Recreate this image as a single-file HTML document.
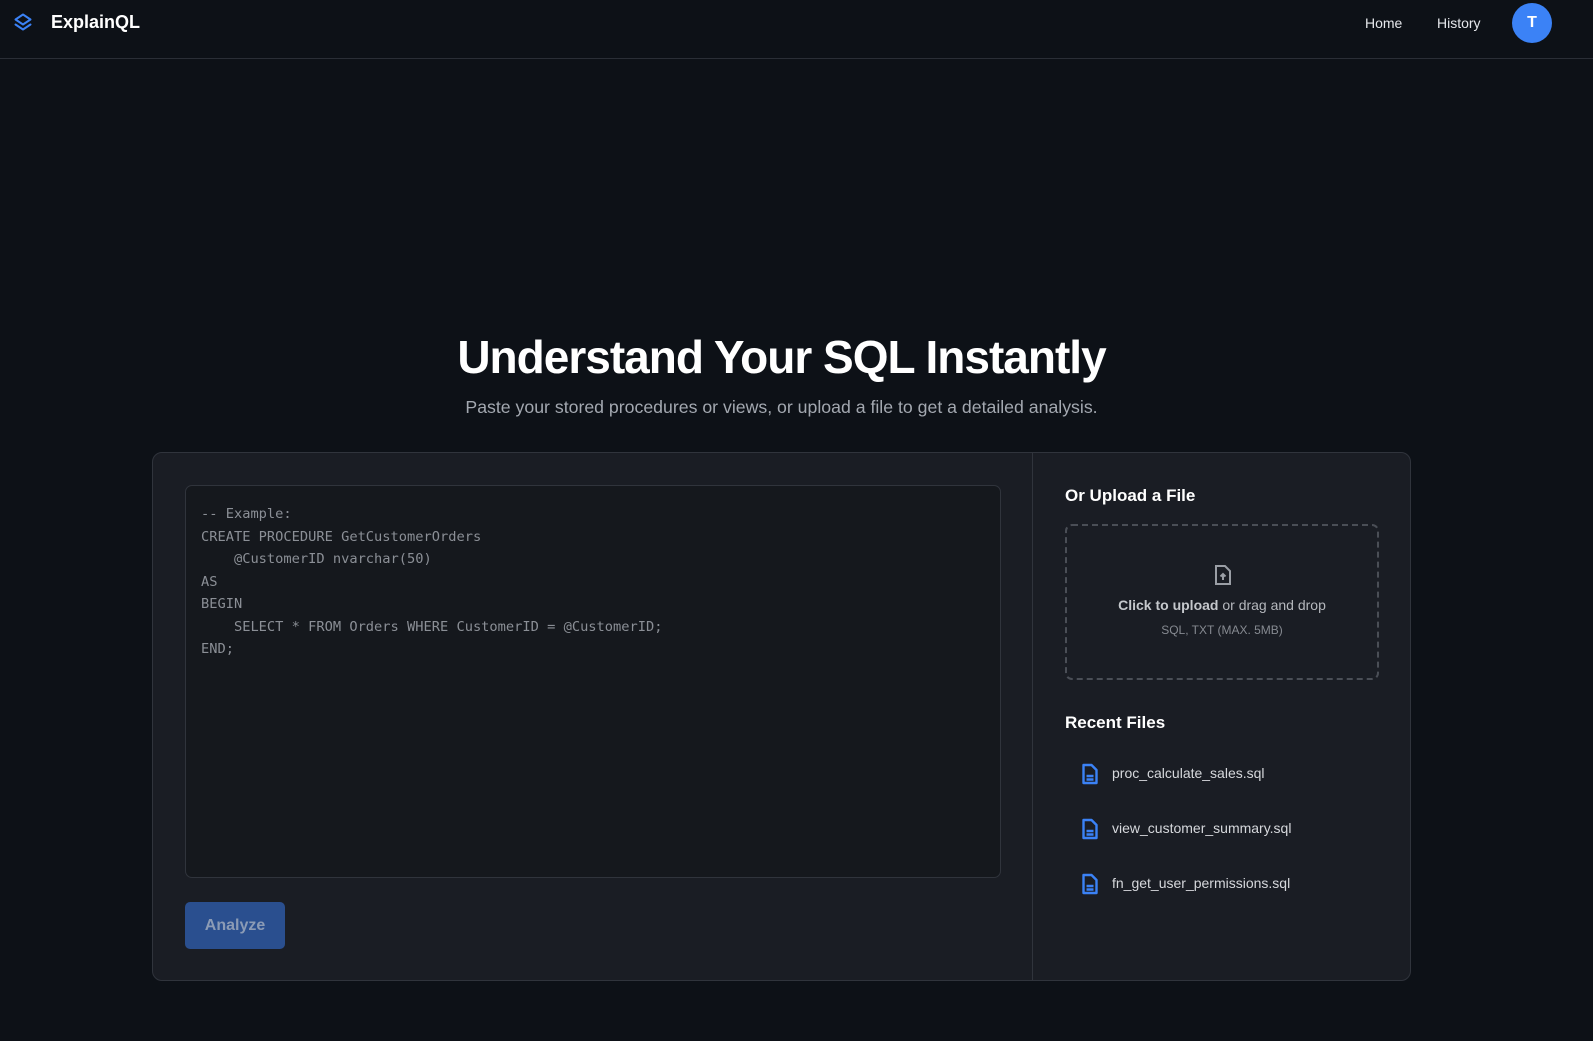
<!DOCTYPE html>
<html><head><meta charset="utf-8"><style>
*{box-sizing:border-box;margin:0;padding:0}
body{width:1593px;height:1041px;background:#0d1117;font-family:"Liberation Sans",sans-serif;color:#e6e6e6;overflow:hidden;position:relative}
.nav{height:59px;border-bottom:1px solid #2a2e36;position:relative}
.logo{position:absolute;left:13px;top:12px}
.brand{position:absolute;left:51px;top:12px;font-size:18px;font-weight:bold;color:#fff}
.nl{position:absolute;top:15px;font-size:14px;color:#e5e7eb}
.av{position:absolute;left:1512px;top:3px;width:40px;height:40px;border-radius:50%;background:#3b82f6;color:#fff;font-weight:bold;font-size:16px;text-align:center;line-height:40px}
h1{position:absolute;left:0;width:1563px;text-align:center;top:330px;font-size:46px;font-weight:bold;color:#fff;letter-spacing:-1px}
.sub{position:absolute;left:0;width:1563px;text-align:center;top:397px;font-size:17.7px;color:#a3a8b0}
.card{position:absolute;left:152px;top:452px;width:1259px;height:529px;background:#1a1d24;border:1px solid #30343c;border-radius:10px}
.div{position:absolute;left:879px;top:0;width:1px;height:100%;background:#30343c}
.ta{position:absolute;left:32px;top:32px;width:816px;height:393px;background:#15181d;border:1px solid #30343c;border-radius:7px;padding:17px 15px;font-family:"DejaVu Sans Mono","Liberation Mono",monospace;font-size:13.7px;line-height:22.5px;color:#8b8f96;white-space:pre}
.btn{position:absolute;left:32px;top:449px;width:100px;height:47px;background:#2a4f8f;border-radius:5px;color:#8b9bb5;font-weight:bold;font-size:16px;text-align:center;line-height:47px}
.h3{position:absolute;font-size:17px;font-weight:bold;color:#fff}
.drop{position:absolute;left:912px;top:71px;width:314px;height:156px;border:2px dashed #4a4e56;border-radius:7px;text-align:center}
.f{position:absolute;left:928px;font-size:14px;color:#d6d8dc}
.f svg{position:absolute;left:0;top:-2px}
.f span{position:absolute;left:31px;white-space:nowrap}
</style></head><body>
<div class="nav">
<svg class="logo" width="20" height="20" viewBox="0 0 24 24" fill="none" stroke="#3b82f6" stroke-width="2.4" stroke-linejoin="round" stroke-linecap="round"><path d="M12 3L3 9l9 6 9-6z"/><path d="M3 15l9 6 9-6"/></svg>
<div class="brand">ExplainQL</div>
<div class="nl" style="left:1365px">Home</div>
<div class="nl" style="left:1437px">History</div>
<div class="av">T</div>
</div>
<h1>Understand Your SQL Instantly</h1>
<div class="sub">Paste your stored procedures or views, or upload a file to get a detailed analysis.</div>
<div class="card">
<div class="div"></div>
<div class="ta">-- Example:
CREATE PROCEDURE GetCustomerOrders
    @CustomerID nvarchar(50)
AS
BEGIN
    SELECT * FROM Orders WHERE CustomerID = @CustomerID;
END;</div>
<div class="btn">Analyze</div>
<div class="h3" style="left:912px;top:33px">Or Upload a File</div>
<div class="drop">
<svg style="position:absolute;left:147px;top:38px" width="18" height="22" viewBox="0 0 18 22" fill="none" stroke="#9a9ea5" stroke-width="2"><path d="M2 2h9l5 5v13H2z"/><path d="M9 16v-6M6.5 12.5L9 10l2.5 2.5"/></svg>
<div style="position:absolute;top:71px;width:100%;font-size:14px;color:#b5b8bd"><b style="color:#c5c8cc">Click to upload</b> or drag and drop</div>
<div style="position:absolute;top:97px;width:100%;font-size:12px;color:#868a91">SQL, TXT (MAX. 5MB)</div>
</div>
<div class="h3" style="left:912px;top:260px">Recent Files</div>
<div class="f" style="top:312px"><svg width="18" height="22" viewBox="0 0 18 22" fill="none" stroke="#3b82f6" stroke-width="2.4" stroke-linejoin="round"><path d="M2.5 2h8l5 5v13h-13z"/><path d="M5.5 13h7M5.5 16.5h7"/></svg><span>proc_calculate_sales.sql</span></div>
<div class="f" style="top:367px"><svg width="18" height="22" viewBox="0 0 18 22" fill="none" stroke="#3b82f6" stroke-width="2.4" stroke-linejoin="round"><path d="M2.5 2h8l5 5v13h-13z"/><path d="M5.5 13h7M5.5 16.5h7"/></svg><span>view_customer_summary.sql</span></div>
<div class="f" style="top:422px"><svg width="18" height="22" viewBox="0 0 18 22" fill="none" stroke="#3b82f6" stroke-width="2.4" stroke-linejoin="round"><path d="M2.5 2h8l5 5v13h-13z"/><path d="M5.5 13h7M5.5 16.5h7"/></svg><span>fn_get_user_permissions.sql</span></div>
</div>
</body></html>
